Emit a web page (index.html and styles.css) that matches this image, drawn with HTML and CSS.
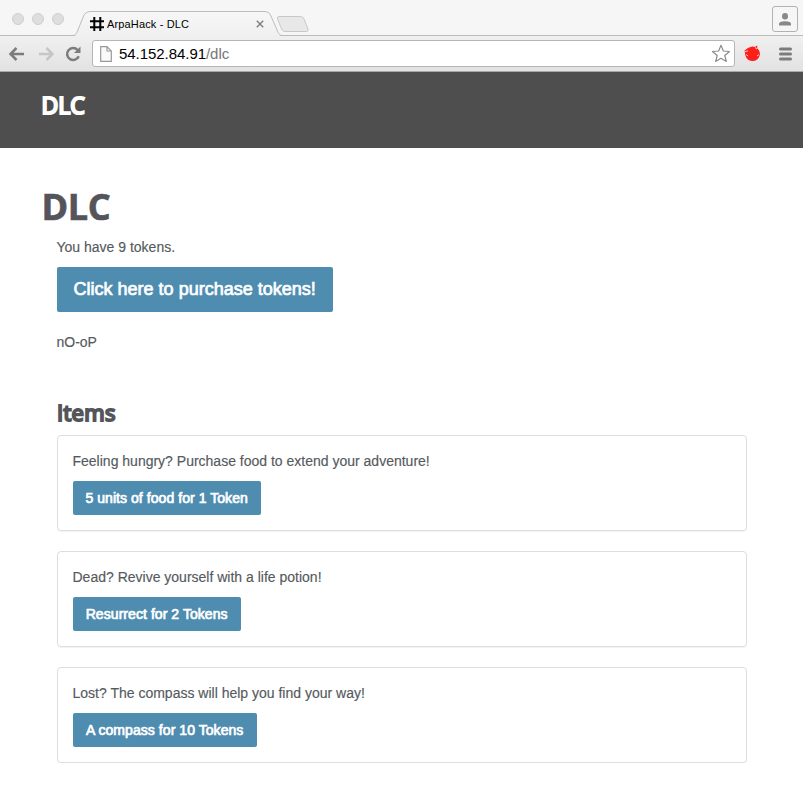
FILE: index.html
```html
<!DOCTYPE html>
<html lang="en">
<head>
<meta charset="utf-8">
<title>ArpaHack - DLC</title>
<link rel="stylesheet" href="styles.css">
</head>
<body>
<div class="browser">
  <div class="tabstrip">
    <div class="lights"><i></i><i></i><i></i></div>
    <div class="tab">
      <svg class="tab-shape" width="212" height="26" viewBox="0 0 212 26">
        <defs><linearGradient id="tabfill" x1="0" y1="0" x2="0" y2="1"><stop offset="0" stop-color="#f7f7f7"/><stop offset="1" stop-color="#f0f0f0"/></linearGradient></defs>
        <path d="M0 26C2 25.500 2 24.500 3.500 21L10 5Q12 1.500 16 1.500H191Q195 1.500 196.500 5L203.500 21C205 24.500 205 25.500 207 26Z" fill="url(#tabfill)"/>
        <path d="M-2 25.500C1 25.500 2 24.500 3.500 21L10 5Q12 1.500 16 1.500H191Q195 1.500 196.500 5L203.500 21C205 24.500 206 25.500 209 25.500" fill="none" stroke="#bcbcbc"/>
      </svg>
      <svg class="favicon" width="14" height="14" viewBox="0 0 14 14"><path d="M4.300 0V14M10.300 0V14M0 4.300H14M0 10.300H14" stroke="#000" stroke-width="2"/></svg>
      <span class="tab-title">ArpaHack - DLC</span>
      <svg class="close" width="8" height="8" viewBox="0 0 8 8"><path d="M.8.8L7.200 7.200M7.200.8L.8 7.200" stroke="#7d7d7d" stroke-width="1.400"/></svg>
    </div>
    <svg class="newtab" width="34" height="18" viewBox="0 0 34 18"><path d="M2 1.500H23.500Q26 1.500 27 4L31 14Q31.700 16.500 29.500 16.500H8Q5.500 16.500 4.500 14L.6 4Q-.2 1.500 2 1.500Z" fill="#e8e8e8" stroke="#c8c8c8"/></svg>
    <div class="profile"><svg width="12" height="13" viewBox="0 0 12 13"><ellipse cx="6" cy="3.300" rx="3" ry="3.200" fill="#888"/><path d="M0 12.500V10.800Q0 8.300 6 8.300T12 10.800V12.500Z" fill="#888"/></svg></div>
  </div>
  <div class="toolbar">
    <svg class="back" width="16" height="14" viewBox="0 0 16 14"><path d="M7.500 1L1.500 7L7.500 13M2 7H15" fill="none" stroke="#7c7c7c" stroke-width="2.500"/></svg>
    <svg class="forward" width="16" height="14" viewBox="0 0 16 14"><path d="M8.500 1L14.500 7L8.500 13M14 7H1" fill="none" stroke="#c6c6c6" stroke-width="2.500"/></svg>
    <svg class="reload" width="16" height="16" viewBox="0 0 16 16"><path d="M12.600 4A6 6 0 1 0 13.700 10.200" fill="none" stroke="#7c7c7c" stroke-width="2.500"/><path d="M15.500 .5V7H9Z" fill="#7c7c7c"/></svg>
    <div class="address">
      <svg class="page-icon" width="12" height="16" viewBox="0 0 12 16"><path d="M.7.7H7L11.300 5V15.300H.7ZM7 .7V5H11.300" fill="#fafafa" stroke="#999" stroke-width="1.200"/></svg>
      <span class="url">54.152.84.91<span class="path">/dlc</span></span>
      <svg class="star" width="20" height="19" viewBox="0 0 20 19"><path d="M10 1.300L12.400 7L18.500 7.500L13.800 11.500L15.300 17.500L10 14.300L4.700 17.500L6.200 11.500L1.500 7.500L7.600 7Z" fill="#fff" stroke="#8c8c8c" stroke-width="1.200" stroke-linejoin="round"/></svg>
    </div>
    <svg class="extension" width="17" height="17" viewBox="0 0 17 17"><path d="M.5 5.500L4 3Q8 .5 11 2L13 .5L14 4Q16 6 16 9Q15 15.500 9 16Q3 16 1.500 11Z" fill="#fb2019"/><path d="M1 6.500L4 6M11 2.500L13 4L13.500 2M2 9.500L4 11M13 11L15 9.500" stroke="#ffd4d0" stroke-width=".9" fill="none"/></svg>
    <svg class="menu" width="13" height="14" viewBox="0 0 13 14"><path d="M1.500 2H11.500M1.500 7H11.500M1.500 12H11.500" stroke="#7c7c7c" stroke-width="3" stroke-linecap="round"/></svg>
  </div>
</div>
<header class="site-header">DLC</header>
<main>
  <h1>DLC</h1>
  <div class="content">
    <p class="balance">You have 9 tokens.</p>
    <button class="btn btn-large">Click here to purchase tokens!</button>
    <p class="message">nO-oP</p>
    <h2>Items</h2>
    <section class="item">
      <p>Feeling hungry? Purchase food to extend your adventure!</p>
      <button class="btn food">5 units of food for 1 Token</button>
    </section>
    <section class="item">
      <p>Dead? Revive yourself with a life potion!</p>
      <button class="btn potion">Resurrect for 2 Tokens</button>
    </section>
    <section class="item">
      <p>Lost? The compass will help you find your way!</p>
      <button class="btn compass">A compass for 10 Tokens</button>
    </section>
  </div>
</main>
</body>
</html>
```
FILE: styles.css
```css
* { box-sizing: border-box; }
body {
  margin: 0;
  background: #fff;
  color: #555a5e;
  font: 14px/20px "Liberation Sans", Arial, sans-serif;
}
p, h1, h2 { margin: 0; }
p { margin-left: -.5px; -webkit-text-stroke: .15px #555a5e; }
svg { display: block; flex: none; }

.browser { height: 72px; background: #f6f6f6; }
.tabstrip {
  display: flex;
  height: 36px;
  border-bottom: 1px solid #bcbcbc;
  border-radius: 5px 5px 0 0;
}
.lights { display: flex; gap: 8px; margin: 13px 0 0 12px; width: 62px; }
.lights i {
  width: 12px;
  height: 12px;
  border: 1px solid #cfcfcf;
  border-radius: 50%;
  background: #dedede;
}
.tab {
  position: relative;
  display: flex;
  align-items: center;
  width: 203px;
  height: 26px;
  margin-top: 10px;
  padding-left: 16px;
}
.tab-shape { position: absolute; left: 0; top: 0; overflow: visible; }
.favicon, .tab-title, .close { position: relative; top: 1px; }
.tab-title { margin-left: 3px; width: 149px; color: #000; font-size: 11px; letter-spacing: .15px; white-space: nowrap; }
.newtab { margin-top: 15px; }
.profile {
  display: flex;
  align-items: center;
  justify-content: center;
  width: 26px;
  height: 26px;
  margin: 6px 5px 0 auto;
  border: 1px solid #b2b2b2;
  border-radius: 3px;
}
.toolbar {
  display: flex;
  align-items: center;
  height: 36px;
  padding-left: 9px;
  border-bottom: 1px solid #a8a8a8;
  background: linear-gradient(#f0f0f0, #e2e2e2);
}
.forward { margin-left: 13px; }
.reload { margin-left: 11px; }
.address {
  display: flex;
  align-items: center;
  width: 643px;
  height: 27px;
  margin-left: 11px;
  padding: 0 3px 0 7px;
  border: 1px solid #b5b5b5;
  border-radius: 3px;
  background: #fff;
}
.url { flex: 1; margin-left: 7px; color: #000; font-size: 15px; letter-spacing: -.05px; }
.path { color: #777; }
.extension { margin-left: 9px; }
.menu { margin-left: 18px; }

.site-header {
  height: 76px;
  padding: 16px 41.500px;
  background: #4e4e4e;
  color: #fff;
  font: 23px/34px "Open Sans", sans-serif;
  -webkit-text-stroke: 2.200px #fff;
}
main { padding: 35px 42px 0; }
h1 {
  color: #54555b;
  font: bold 36px/48px "Open Sans", sans-serif;
  letter-spacing: -.4px;
  margin-left: -.5px;
  -webkit-text-stroke: .7px #54555b;
}
.content { padding: 6px 14px 0 15px; }
.btn {
  display: block;
  width: 188px;
  height: 34px;
  padding: 0;
  border: 0;
  border-radius: 2px;
  background: #4e8cb0;
  color: #fff;
  font: 14px/34px "Liberation Sans", Arial, sans-serif;
  letter-spacing: .06px;
  text-indent: -.7px;
  -webkit-text-stroke: .7px #fff;
  white-space: nowrap;
}
.btn-large { width: 276px; height: 45px; margin-top: 10px; font-size: 18px; line-height: 45px; letter-spacing: 0; }
.message { margin-top: 20px; }
h2 { margin-top: 45px; color: #54555b; font: 22px/30px "Open Sans", sans-serif; letter-spacing: .3px; -webkit-text-stroke: 2px #54555b; }
.item {
  height: 96px;
  padding: 15px;
  border: 1px solid #ddd;
  border-radius: 4px;
  box-shadow: 0 1px 1px rgba(0, 0, 0, .05);
}
h2 + .item { margin-top: 8px; }
.item + .item { margin-top: 20px; }
.item .btn { margin-top: 10px; }
.item .potion { width: 168px; }
.item .compass { width: 184px; }
```
